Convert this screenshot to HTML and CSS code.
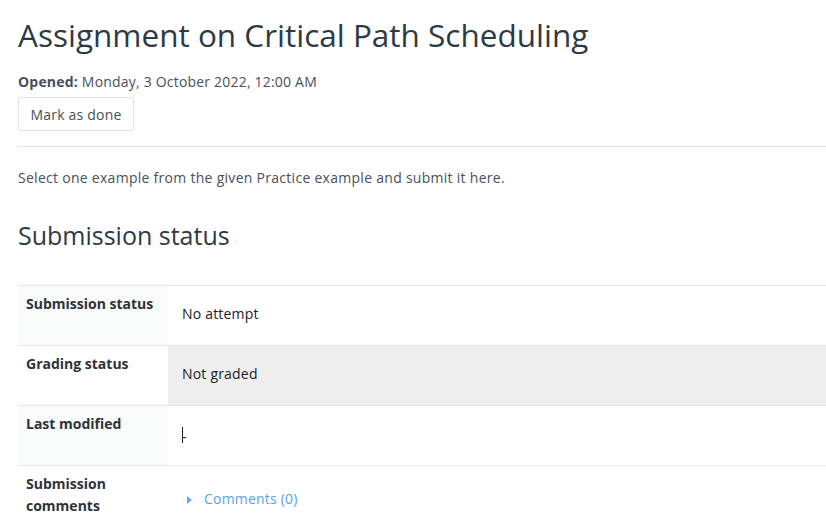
FILE: index.html
```html
<!DOCTYPE html>
<html>
<head>
<meta charset="utf-8">
<link rel="stylesheet" href="styles.css">
</head>
<body>
<div class="page">
  <h2 class="title">Assignment on Critical Path Scheduling</h2>
  <div class="dates"><strong>Opened:</strong> Monday, 3 October 2022, 12:00 AM</div>
  <button class="btn">Mark as done</button>
  <hr class="sep">
  <p class="intro">Select one example from the given Practice example and submit it here.</p>
  <h3 class="subhead">Submission status</h3>
  <table class="status">
    <tr class="odd">
      <th>Submission status</th>
      <td>No attempt</td>
    </tr>
    <tr class="even">
      <th>Grading status</th>
      <td class="shade">Not graded</td>
    </tr>
    <tr class="odd">
      <th>Last modified</th>
      <td><span class="dash">-</span></td>
    </tr>
    <tr class="even last">
      <th>Submission comments</th>
      <td><a class="comments" href="#"><svg class="caret" width="8" height="10" viewBox="0 0 8 10"><path d="M1 1 L6 5 L1 9 Z" fill="#6aa8e8"/></svg>Comments (0)</a></td>
    </tr>
  </table>
</div>
</body>
</html>
```
FILE: styles.css
```css
html, body {
  margin: 0;
  padding: 0;
  background: #fff;
}
body {
  font-family: "Open Sans", "Noto Sans", sans-serif;
  color: #1d2125;
  overflow: hidden;
}
.page {
  padding-left: 18px;
}
.title {
  margin: 0;
  padding-top: 13px;
  font-size: 31.5px;
  font-weight: 400;
  line-height: 44px;
  color: #2d3a45;
}
.dates {
  margin-top: 15px;
  font-size: 14px;
  line-height: 20px;
  color: #495057;
  letter-spacing: 0.2px;
}
.dates strong {
  font-weight: 700;
}
.btn {
  display: block;
  margin-top: 5px;
  height: 34px;
  width: 116px;
  padding: 0;
  background: #fff;
  border: 1px solid #dee2e6;
  border-radius: 3px;
  font-family: inherit;
  font-size: 14px;
  color: #495057;
  letter-spacing: 0.2px;
}
.sep {
  margin: 15px 0 0 0;
  border: 0;
  border-top: 1px solid #e3e3e3;
  height: 0;
}
.intro {
  margin: 21px 0 0 0;
  font-size: 14px;
  line-height: 20px;
  color: #495057;
  letter-spacing: 0.28px;
}
.subhead {
  margin: 29px 0 0 0;
  font-size: 25px;
  font-weight: 400;
  line-height: 36px;
  color: #2d3a45;
}
.status {
  margin-top: 32px;
  width: 808px;
  border-collapse: collapse;
}
.status tr {
  border-top: 1px solid #e6e8ea;
}
.status th {
  width: 134px;
  height: 42px;
  padding: 7px 8px 10px 8px;
  background: #fff;
  text-align: left;
  vertical-align: top;
  font-size: 14px;
  font-weight: 700;
  line-height: 22px;
  color: #2d3339;
}
.status tr.odd th {
  background: #f9fafa;
}
.status tr.last th {
  padding-bottom: 18px;
}
.status td {
  padding: 6px 14px 10px 14px;
  vertical-align: middle;
  font-size: 14px;
  line-height: 20px;
  color: #1d2125;
  letter-spacing: 0.2px;
}
.status td.shade {
  background: #eeeeee;
}
.dash {
  display: inline-block;
  width: 1px;
  height: 16px;
  background: #1d2125;
  position: relative;
  top: 3px;
}
.comments {
  color: #5aa2e8;
  text-decoration: none;
  font-size: 14px;
}
.caret {
  margin: 0 10px 0 4px;
  vertical-align: -1px;
}
```
